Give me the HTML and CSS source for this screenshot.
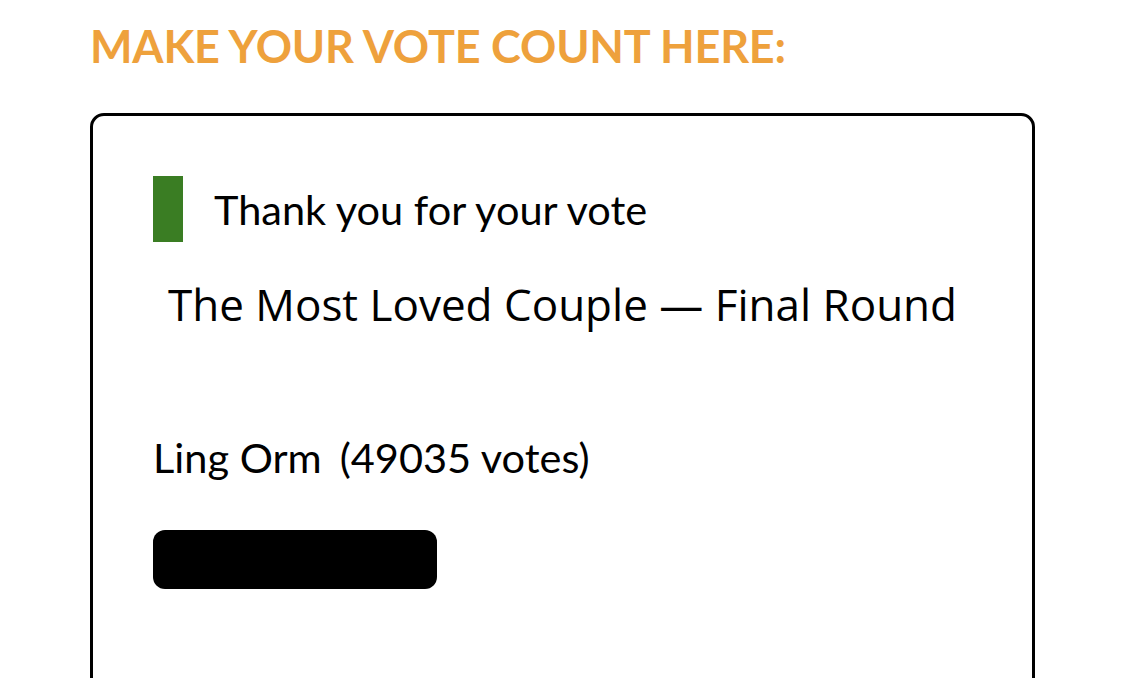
FILE: index.html
```html
<!DOCTYPE html>
<html>
<head>
<meta charset="utf-8">
<link rel="stylesheet" href="styles.css">
</head>
<body>
<div class="page">
  <h2 class="heading">MAKE YOUR VOTE COUNT HERE:</h2>
  <div class="card">
    <div class="notice">
      <span class="notice-bar"></span>
      <span class="notice-text">Thank you for your vote</span>
    </div>
    <div class="poll-title">The Most Loved Couple — Final Round</div>
    <div class="result">
      <div class="result-label"><span class="name">Ling Orm</span><span class="votes">(49035 votes)</span></div>
      <div class="result-bar"></div>
    </div>
  </div>
</div>
</body>
</html>
```

FILE: styles.css
```css
html, body {
  margin: 0;
  padding: 0;
  background: #fff;
}
.page {
  padding: 22px 0 0 90px;
  width: 945px;
  font-family: Lato, "Noto Sans", sans-serif;
  color: #000;
}
.heading {
  margin: 0;
  font-family: Lato, sans-serif;
  font-weight: 700;
  font-size: 45px;
  line-height: 48px;
  color: #eea13c;
  letter-spacing: -0.2px;
}
.card {
  margin-top: 43px;
  border: 3px solid #000;
  border-radius: 14px;
  height: 700px;
  padding: 60px 0 0 60px;
  box-sizing: border-box;
}
.notice {
  display: flex;
  align-items: center;
  gap: 31px;
}
.notice-bar {
  width: 30px;
  height: 66px;
  background: #3a7d23;
}
.notice-text {
  font-size: 41.5px;
}
.poll-title {
  margin-top: 32px;
  padding-left: 15px;
  font-family: "Open Sans", sans-serif;
  font-size: 44px;
  line-height: 60px;
}
.result {
  margin-top: 98px;
}
.result-label {
  font-size: 41.5px;
  line-height: 50px;
}
.name {
  margin-right: 18px;
}
.result-bar {
  margin-top: 48px;
  width: 284px;
  height: 59px;
  background: #000;
  border-radius: 12px;
}
```
